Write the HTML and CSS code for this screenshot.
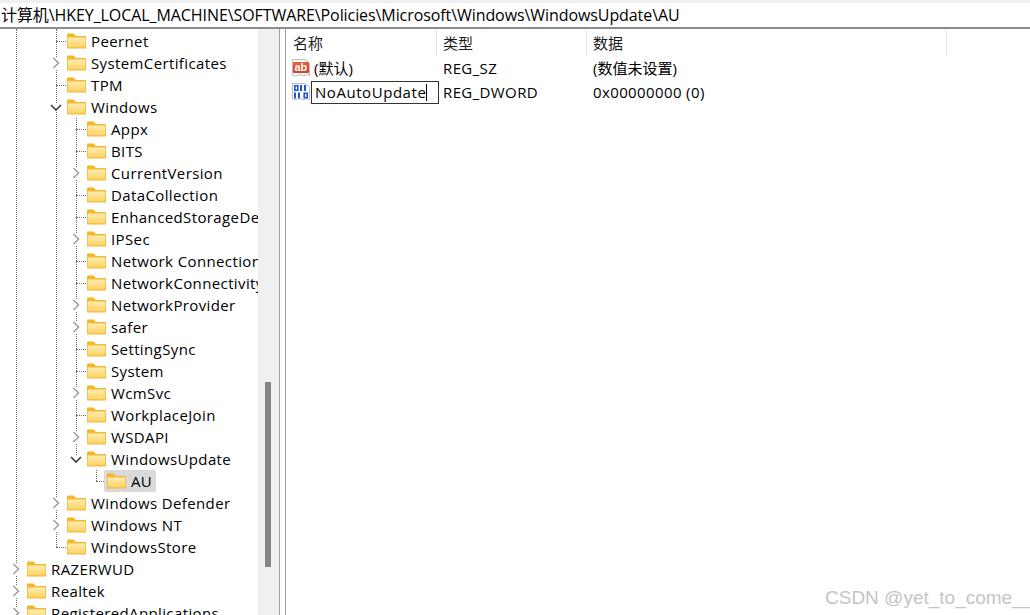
FILE: index.html
```html
<!DOCTYPE html>
<html lang="zh">
<head>
<meta charset="utf-8">
<title>Registry Editor</title>
<link rel="stylesheet" href="styles.css">
</head>
<body>
<svg class="defs" width="0" height="0" aria-hidden="true">
  <defs>
    <linearGradient id="fg" x1="0" y1="0" x2="0" y2="1">
      <stop offset="0" stop-color="#ffedb0"/>
      <stop offset="1" stop-color="#fdd365"/>
    </linearGradient>
    <linearGradient id="rg" x1="0" y1="0" x2="0" y2="1">
      <stop offset="0" stop-color="#e8603a"/>
      <stop offset="1" stop-color="#d43f25"/>
    </linearGradient>
    <symbol id="folder" viewBox="0 0 19 16">
      <path d="M0 1.500Q0 .5 1 .5h5.500l2.500 2.500v1H0z" fill="#f9b61a"/>
      <path d="M0 3h19v12.500H0z" fill="#f3b93c"/>
      <path d="M.8 4.500h17.400v9.800H.8z" fill="url(#fg)"/>
    </symbol>
    <symbol id="more" viewBox="0 0 9 12">
      <path d="M1.500 1 6.500 6l-5 5" fill="none" stroke="#a0a0a0" stroke-width="1.600"/>
    </symbol>
    <symbol id="open" viewBox="0 0 12 9">
      <path d="M1 2 6 7l5-5" fill="none" stroke="#3c3c3c" stroke-width="1.600"/>
    </symbol>
  </defs>
</svg>
<div class="address">计算机\HKEY_LOCAL_MACHINE\SOFTWARE\Policies\Microsoft\Windows\WindowsUpdate\AU</div>
<div class="main">
  <div class="tree-pane">
    <div class="tree">
      <i class="guide g1"></i><i class="guide g2"></i><i class="guide g3"></i><i class="guide g4"></i>
      <div class="row l2 leaf"><span class="tw"></span><svg class="fo"><use href="#folder"/></svg><span class="lb">Peernet</span></div>
      <div class="row l2"><span class="tw"><svg class="ar"><use href="#more"/></svg></span><svg class="fo"><use href="#folder"/></svg><span class="lb">SystemCertificates</span></div>
      <div class="row l2 leaf"><span class="tw"></span><svg class="fo"><use href="#folder"/></svg><span class="lb">TPM</span></div>
      <div class="row l2"><span class="tw"><svg class="ao"><use href="#open"/></svg></span><svg class="fo"><use href="#folder"/></svg><span class="lb">Windows</span></div>
      <div class="row l3 leaf"><span class="tw"></span><svg class="fo"><use href="#folder"/></svg><span class="lb">Appx</span></div>
      <div class="row l3 leaf"><span class="tw"></span><svg class="fo"><use href="#folder"/></svg><span class="lb">BITS</span></div>
      <div class="row l3"><span class="tw"><svg class="ar"><use href="#more"/></svg></span><svg class="fo"><use href="#folder"/></svg><span class="lb">CurrentVersion</span></div>
      <div class="row l3 leaf"><span class="tw"></span><svg class="fo"><use href="#folder"/></svg><span class="lb">DataCollection</span></div>
      <div class="row l3 leaf"><span class="tw"></span><svg class="fo"><use href="#folder"/></svg><span class="lb">EnhancedStorageDevices</span></div>
      <div class="row l3"><span class="tw"><svg class="ar"><use href="#more"/></svg></span><svg class="fo"><use href="#folder"/></svg><span class="lb">IPSec</span></div>
      <div class="row l3 leaf"><span class="tw"></span><svg class="fo"><use href="#folder"/></svg><span class="lb">Network Connections</span></div>
      <div class="row l3 leaf"><span class="tw"></span><svg class="fo"><use href="#folder"/></svg><span class="lb">NetworkConnectivityStatus</span></div>
      <div class="row l3"><span class="tw"><svg class="ar"><use href="#more"/></svg></span><svg class="fo"><use href="#folder"/></svg><span class="lb">NetworkProvider</span></div>
      <div class="row l3"><span class="tw"><svg class="ar"><use href="#more"/></svg></span><svg class="fo"><use href="#folder"/></svg><span class="lb">safer</span></div>
      <div class="row l3 leaf"><span class="tw"></span><svg class="fo"><use href="#folder"/></svg><span class="lb">SettingSync</span></div>
      <div class="row l3 leaf"><span class="tw"></span><svg class="fo"><use href="#folder"/></svg><span class="lb">System</span></div>
      <div class="row l3"><span class="tw"><svg class="ar"><use href="#more"/></svg></span><svg class="fo"><use href="#folder"/></svg><span class="lb">WcmSvc</span></div>
      <div class="row l3 leaf"><span class="tw"></span><svg class="fo"><use href="#folder"/></svg><span class="lb">WorkplaceJoin</span></div>
      <div class="row l3"><span class="tw"><svg class="ar"><use href="#more"/></svg></span><svg class="fo"><use href="#folder"/></svg><span class="lb">WSDAPI</span></div>
      <div class="row l3"><span class="tw"><svg class="ao"><use href="#open"/></svg></span><svg class="fo"><use href="#folder"/></svg><span class="lb">WindowsUpdate</span></div>
      <div class="row l4 leaf"><span class="tw"></span><span class="selbox"><svg class="fo"><use href="#folder"/></svg><span class="lb">AU</span></span></div>
      <div class="row l2"><span class="tw"><svg class="ar"><use href="#more"/></svg></span><svg class="fo"><use href="#folder"/></svg><span class="lb">Windows Defender</span></div>
      <div class="row l2"><span class="tw"><svg class="ar"><use href="#more"/></svg></span><svg class="fo"><use href="#folder"/></svg><span class="lb">Windows NT</span></div>
      <div class="row l2 leaf"><span class="tw"></span><svg class="fo"><use href="#folder"/></svg><span class="lb">WindowsStore</span></div>
      <div class="row l1"><span class="tw"><svg class="ar"><use href="#more"/></svg></span><svg class="fo"><use href="#folder"/></svg><span class="lb">RAZERWUD</span></div>
      <div class="row l1"><span class="tw"><svg class="ar"><use href="#more"/></svg></span><svg class="fo"><use href="#folder"/></svg><span class="lb">Realtek</span></div>
      <div class="row l1"><span class="tw"><svg class="ar"><use href="#more"/></svg></span><svg class="fo"><use href="#folder"/></svg><span class="lb">RegisteredApplications</span></div>
    </div>
    <div class="scroll"><div class="thumb"></div></div>
  </div>
  <div class="list-pane">
    <div class="head">
      <div class="hc c1">名称</div><div class="hc c2">类型</div><div class="hc c3">数据</div>
    </div>
    <div class="vrow">
      <svg class="vi" viewBox="0 0 20 20"><path d="M1.500 1.500h13l4 4v12l-3-1-3 1.500-4-1.500-4 1.500-3-1z" fill="#fafafa" stroke="#bcbcbc"/><rect x="2" y="4" width="16" height="11" rx="1" fill="url(#rg)"/><text x="3.400" y="13" class="vt">ab</text></svg>
      <div class="c1 name">(默认)</div><div class="c2 val">REG_SZ</div><div class="c3 val cjk">(数值未设置)</div>
    </div>
    <div class="vrow">
      <svg class="vi" viewBox="0 0 20 20"><path d="M1.500 1.500h13l4 4v12l-3-1-3 1.500-4-1.500-4 1.500-3-1z" fill="#fafafa" stroke="#bcbcbc"/><path d="M3.800 3.800h3v4.400h-3zM13.200 11.300h3v4.400h-3z" fill="none" stroke="#1f55d0" stroke-width="1.600"/><path d="M10 3v6M14 3v6M4 10.500v6M8 10.500v6" stroke="#1f55d0" stroke-width="2"/></svg>
      <div class="c1 name"><span class="edit">NoAutoUpdate<i class="caret"></i></span></div><div class="c2 val">REG_DWORD</div><div class="c3 val">0x00000000 (0)</div>
    </div>
  </div>
</div>
<div class="mark">CSDN @yet_to_come__</div>
</body>
</html>
```
FILE: styles.css
```css
* { box-sizing: border-box; }
html, body { margin: 0; height: 100%; overflow: hidden; }
body {
  width: 1030px; height: 615px; background: #fff; color: #000;
  font: 15px/22px "Open Sans", "Noto Sans CJK SC", sans-serif;
  display: flex; flex-direction: column; position: relative;
}
.defs { position: absolute; }
.address {
  height: 29px; padding: 2px 0 0 1px; white-space: nowrap; overflow: hidden;
  border-top: 3px solid #f0f0f0; border-bottom: 2px solid #8c8c8c;
  font-size: 16px; line-height: 21px; letter-spacing: -.08px;
}
.main { flex: 1; display: flex; min-height: 0; }
.tree-pane { width: 280px; display: flex; border-right: 1px solid #a0a0a0; overflow: hidden; }
.tree { width: 258px; overflow: hidden; padding-top: 1px; position: relative; letter-spacing: .38px; }
.row { height: 22px; display: flex; align-items: center; white-space: nowrap; position: relative; }
.l1 { padding-left: 8px; }
.l2 { padding-left: 48px; }
.l3 { padding-left: 68px; }
.l4 { padding-left: 88px; }
.tw { width: 17px; height: 22px; flex: none; display: flex; align-items: center; justify-content: center; position: relative; padding-right: 1px; }
.ar { width: 9px; height: 12px; background: #fff; position: relative; }
.ao { width: 12px; height: 9px; background: #fff; position: relative; }
.leaf .tw::before {
  content: ""; position: absolute; left: 8px; top: 11px; width: 10px;
  border-top: 1px dotted #6e6e6e;
}
.guide { position: absolute; width: 0; border-left: 1px dotted #6e6e6e; }
.g1 { left: 16px; top: 0; height: 100%; }
.g2 { left: 56px; top: 0; height: 518px; }
.g3 { left: 76px; top: 89px; height: 341px; }
.g4 { left: 96px; top: 441px; height: 11px; }
.fo { width: 19px; height: 16px; flex: none; margin: 0 5px 0 2px; }
.lb { flex: none; }
.selbox { display: flex; align-items: center; background: #d9d9d9; border-radius: 2px; height: 22px; padding: 0 4px 0 1px; margin-left: -1px; position: relative; }
.scroll { width: 21px; background: #f0f0f0; flex: none; padding: 353px 7px 0; }
.thumb { width: 6px; height: 185px; background: #858585; }
.list-pane { flex: 1; margin-left: 5px; border-left: 1px solid #a0a0a0; min-width: 0; }
.head { display: flex; height: 27px; padding-top: 1px; }
.hc { border-right: 1px solid #e5e5e5; padding-left: 6px; color: #1a1a1a; line-height: 27px; }
.hc.c1 { width: 151px; padding-left: 7px; }
.hc.c2 { width: 150px; }
.hc.c3 { width: 360px; }
.vrow { display: flex; height: 24px; align-items: center; position: relative; padding-left: 5px; }
.vi { width: 20px; height: 20px; flex: none; }
.vt { font: bold 11px "Liberation Sans", sans-serif; fill: #fff; }
.vrow .c1 { width: 126px; padding-left: 3px; flex: none; }
.vrow .c2 { width: 150px; padding-left: 6px; flex: none; }
.vrow .c3 { padding-left: 6px; }
.val { letter-spacing: .38px; }
.val.cjk { letter-spacing: 0; }
.edit { display: block; width: 128px; height: 23px; margin-left: -3px; border: 1px solid #333; padding-left: 3px; line-height: 21px; background: #fff; letter-spacing: .55px; }
.caret { display: inline-block; width: 1px; height: 17px; background: #000; vertical-align: -3px; }
.mark {
  position: absolute; right: 0; bottom: 5px; width: 205px; color: #c4c4c4;
  font: 19px/24px "Liberation Sans", sans-serif; white-space: nowrap;
}
```
